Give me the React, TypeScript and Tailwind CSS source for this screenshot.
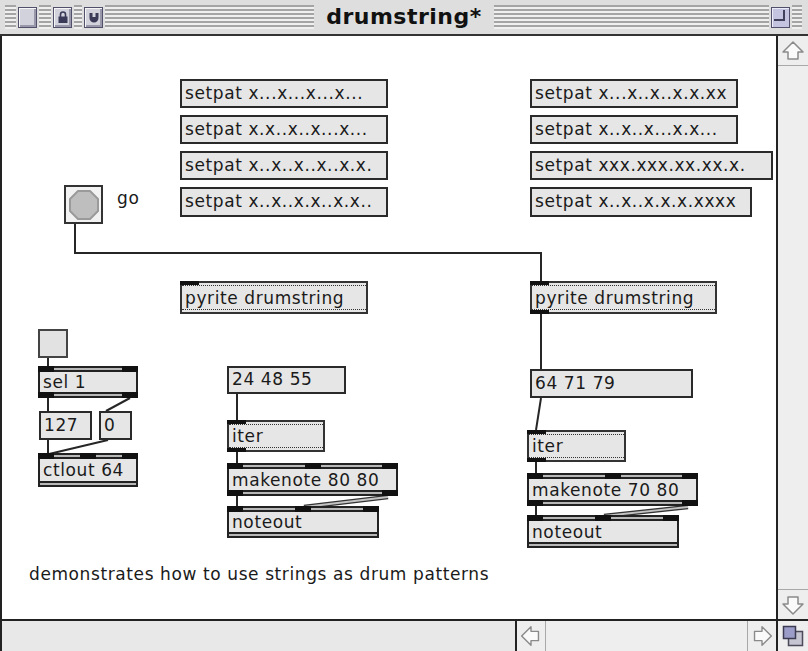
import React from 'react';

// patcher canvas origin on the page (left border 2px, title bar 36px)
const OX = 2;
const OY = 36;

type Box = {
    kind: 'msg' | 'obj' | 'dot' | 'toggle' | 'bang';
    x: number;
    y: number;
    w: number;
    h: number;
    text?: string;
    ins?: number;
    outs?: number;
};

const boxes: Box[] = [
    { kind: 'msg', x: 180, y: 79, w: 208, h: 29, text: 'setpat x...x...x...x...' },
    { kind: 'msg', x: 180, y: 115, w: 208, h: 29, text: 'setpat x.x..x..x...x...' },
    { kind: 'msg', x: 180, y: 151, w: 208, h: 29, text: 'setpat x..x..x..x..x.x.' },
    { kind: 'msg', x: 180, y: 187, w: 208, h: 30, text: 'setpat x..x..x.x..x.x..' },
    { kind: 'msg', x: 530, y: 79, w: 208, h: 29, text: 'setpat x...x..x..x.x.xx' },
    { kind: 'msg', x: 530, y: 115, w: 208, h: 29, text: 'setpat x..x..x...x.x...' },
    { kind: 'msg', x: 530, y: 151, w: 243, h: 29, text: 'setpat xxx.xxx.xx.xx.x.' },
    { kind: 'msg', x: 530, y: 187, w: 222, h: 30, text: 'setpat x..x..x.x.x.xxxx' },
    { kind: 'bang', x: 64, y: 185, w: 39, h: 39 },
    { kind: 'dot', x: 180, y: 281, w: 188, h: 33, text: 'pyrite drumstring', ins: 1, outs: 0 },
    { kind: 'dot', x: 530, y: 281, w: 187, h: 33, text: 'pyrite drumstring', ins: 1, outs: 1 },
    { kind: 'toggle', x: 38, y: 329, w: 30, h: 29 },
    { kind: 'obj', x: 38, y: 366, w: 100, h: 32, text: 'sel 1', ins: 2, outs: 2 },
    { kind: 'msg', x: 39, y: 411, w: 53, h: 29, text: '127' },
    { kind: 'msg', x: 99, y: 411, w: 33, h: 29, text: '0' },
    { kind: 'obj', x: 38, y: 453, w: 100, h: 34, text: 'ctlout 64', ins: 3, outs: 0 },
    { kind: 'msg', x: 227, y: 366, w: 119, h: 28, text: '24 48 55' },
    { kind: 'dot', x: 227, y: 420, w: 98, h: 32, text: 'iter', ins: 1, outs: 1 },
    { kind: 'obj', x: 227, y: 463, w: 171, h: 33, text: 'makenote 80 80', ins: 3, outs: 2 },
    { kind: 'obj', x: 227, y: 506, w: 152, h: 32, text: 'noteout', ins: 3, outs: 0 },
    { kind: 'msg', x: 530, y: 369, w: 163, h: 29, text: '64 71 79' },
    { kind: 'dot', x: 527, y: 430, w: 99, h: 32, text: 'iter', ins: 1, outs: 1 },
    { kind: 'obj', x: 527, y: 473, w: 171, h: 33, text: 'makenote 70 80', ins: 3, outs: 2 },
    { kind: 'obj', x: 527, y: 515, w: 152, h: 33, text: 'noteout', ins: 3, outs: 0 },
];

// patch cords, page coordinates
const cords: { pts: number[][]; fat?: boolean }[] = [
    { pts: [[75, 224], [75, 253], [541, 253], [541, 283]] },
    { pts: [[541, 314], [541, 369]] },
    { pts: [[541, 398], [536, 430]] },
    { pts: [[536, 462], [536, 473]] },
    { pts: [[536, 506], [536, 515]] },
    { pts: [[688, 507], [604, 516]], fat: true },
    { pts: [[237, 394], [237, 420]] },
    { pts: [[237, 452], [237, 463]] },
    { pts: [[237, 496], [237, 506]] },
    { pts: [[388, 497], [304, 507]], fat: true },
    { pts: [[48, 358], [48, 366]] },
    { pts: [[48, 398], [48, 411]] },
    { pts: [[130, 398], [106, 411]] },
    { pts: [[48, 440], [48, 453]] },
    { pts: [[108, 440], [49, 454]] },
];

const font = "font-['DejaVu_Sans',sans-serif] text-[17px] tracking-[0.6px] text-[#1a1a1a]";

function Ports({ n, side }: { n: number; side: 'top' | 'bottom' }) {
    if (!n) return null;
    return (
        <div
            className={
                'absolute -left-[2px] -right-[2px] flex ' +
                (n > 1 ? 'justify-between ' : 'justify-start ') +
                (side === 'top' ? '-top-[2px]' : '-bottom-[2px]')
            }
        >
            {Array.from({ length: n }).map((_, i) => (
                <div key={i} className="h-[6px] w-[16px] bg-[#111]" />
            ))}
        </div>
    );
}

function PatchBox({ b }: { b: Box }) {
    const pos = { left: b.x - OX, top: b.y - OY, width: b.w, height: b.h };

    if (b.kind === 'msg') {
        return (
            <div
                className={`absolute flex items-center border-2 border-[#2a2a2a] bg-[#e6e6e6] pl-[3px] pb-[2px] leading-[20px] whitespace-nowrap overflow-hidden ${font}`}
                style={pos}
            >
                {b.text}
            </div>
        );
    }

    if (b.kind === 'obj') {
        return (
            <div className="absolute flex flex-col border-2 border-[#222] bg-[#e6e6e6]" style={pos}>
                <div className="h-[4px] border-b-2 border-[#222] bg-[#b8b8b8]" />
                <div className={`flex flex-1 items-center pl-[3px] leading-[20px] whitespace-nowrap ${font}`}>
                    {b.text}
                </div>
                <div className="h-[4px] border-t-2 border-[#222] bg-[#b8b8b8]" />
                <Ports n={b.ins ?? 0} side="top" />
                <Ports n={b.outs ?? 0} side="bottom" />
            </div>
        );
    }

    if (b.kind === 'dot') {
        return (
            <div className="absolute flex flex-col border-2 border-[#333] bg-[#e6e6e6]" style={pos}>
                <div className="h-[3px] border-b border-dotted border-[#333]" />
                <div className={`flex flex-1 items-center pl-[3px] leading-[20px] whitespace-nowrap ${font}`}>
                    {b.text}
                </div>
                <div className="h-[3px] border-t border-dotted border-[#333]" />
                {b.ins ? <div className="absolute -left-[2px] -top-[2px] h-[4px] w-[19px] bg-[#111]" /> : null}
                {b.outs ? <div className="absolute -left-[2px] -bottom-[2px] h-[4px] w-[19px] bg-[#111]" /> : null}
            </div>
        );
    }

    if (b.kind === 'toggle') {
        return <div className="absolute border-2 border-[#444] bg-[#e2e2e2]" style={pos} />;
    }

    // bang
    return (
        <div className="absolute flex items-center justify-center border-2 border-[#333] bg-[#f2f2f2]" style={pos}>
            <svg width="32" height="32" viewBox="0 0 32 32">
                <polygon
                    points="10,2 22,2 30,10 30,22 22,30 10,30 2,22 2,10"
                    fill="#bebebe"
                    stroke="#9a9a9a"
                    strokeWidth="2"
                    strokeLinejoin="round"
                />
            </svg>
        </div>
    );
}

function Stripes({ className }: { className: string }) {
    return (
        <div
            className={`h-[24px] bg-[repeating-linear-gradient(to_bottom,#a4a4a4_0px,#a4a4a4_2px,#efefef_2px,#efefef_4px)] ${className}`}
        />
    );
}

function TitleButton({ children }: { children?: React.ReactNode }) {
    return (
        <div className="flex h-[21px] w-[19px] items-center justify-center border border-[#50506a] bg-[#d2d2dc] shadow-[inset_1px_1px_0_#f6f6f6,inset_-2px_-2px_0_#9898aa]">
            {children}
        </div>
    );
}

function ScrollArrow({ dir }: { dir: 'up' | 'down' | 'left' | 'right' }) {
    const pts = {
        up: '15,6 25,16 20,16 20,23 10,23 10,16 5,16',
        down: '15,24 25,14 20,14 20,7 10,7 10,14 5,14',
        left: '5,15 15,5 15,10 23,10 23,20 15,20 15,25',
        right: '25,15 15,5 15,10 7,10 7,20 15,20 15,25',
    }[dir];
    return (
        <svg width="30" height="30" viewBox="0 0 30 30">
            <polygon points={pts} fill="#fafafa" stroke="#8a8a8a" strokeWidth="1.5" strokeLinejoin="round" />
        </svg>
    );
}

export default function App() {
    return (
        <div className="flex h-[651px] w-[808px] flex-col overflow-hidden bg-[#dedede]">
            {/* Title bar */}
            <div className="grid h-[36px] shrink-0 grid-cols-[1fr_auto_1fr] items-center border-b-2 border-[#333] bg-[#dedede]">
                <div className="flex items-center gap-[2px] pl-[5px]">
                    <Stripes className="w-[11px]" />
                    <TitleButton />
                    <Stripes className="w-[12px]" />
                    <TitleButton>
                        <svg width="12" height="14" viewBox="0 0 12 14">
                            <path d="M3.5 7 V4.5 a2.5 2.5 0 0 1 5 0 V7" fill="none" stroke="#3a3a58" strokeWidth="1.6" />
                            <rect x="1.5" y="6.5" width="9" height="6.5" fill="#3a3a58" />
                        </svg>
                    </TitleButton>
                    <Stripes className="w-[8px]" />
                    <TitleButton>
                        <svg width="12" height="13" viewBox="0 0 12 13">
                            <path d="M1.5 2 h3 v4 h3 v-4 h3 v5 a4.5 4.5 0 0 1 -9 0 z" fill="#3a3a58" />
                        </svg>
                    </TitleButton>
                    <Stripes className="flex-1" />
                </div>
                <div className="px-[12px] font-['DejaVu_Sans',sans-serif] text-[22px] font-bold leading-none tracking-[0.5px] text-[#111]">
                    drumstring*
                </div>
                <div className="flex items-center gap-[2px] pr-[6px]">
                    <Stripes className="flex-1" />
                    <div className="flex h-[21px] w-[19px] items-start justify-start border border-[#50506a] bg-[#c4c4e0] p-[2px] shadow-[inset_1px_1px_0_#ececf8]">
                        <div className="h-[11px] w-[11px] border-r-2 border-b-2 border-[#40405a]" />
                    </div>
                    <Stripes className="w-[10px]" />
                </div>
            </div>

            {/* Canvas + vertical scrollbar */}
            <div className="flex min-h-0 flex-1 border-l-2 border-[#222]">
                <div className="relative flex-1 overflow-hidden bg-white">
                    <svg className="absolute inset-0 h-full w-full" viewBox={`${OX} ${OY} 774 583`} preserveAspectRatio="none">
                        {cords.map((c, i) => {
                            const p = c.pts.map(q => q.join(',')).join(' ');
                            return c.fat ? (
                                <g key={i}>
                                    <polyline points={p} fill="none" stroke="#333" strokeWidth="4.5" />
                                    <polyline points={p} fill="none" stroke="#c4c4c4" strokeWidth="1.8" />
                                </g>
                            ) : (
                                <polyline key={i} points={p} fill="none" stroke="#262626" strokeWidth="2" />
                            );
                        })}
                    </svg>

                    {boxes.map((b, i) => (
                        <PatchBox key={i} b={b} />
                    ))}

                    <div className={`absolute left-[115px] top-[152px] leading-[20px] ${font}`}>go</div>
                    <div className={`absolute left-[27px] top-[528px] whitespace-nowrap leading-[20px] ${font}`}>
                        demonstrates how to use strings as drum patterns
                    </div>
                </div>

                <div className="flex w-[32px] shrink-0 flex-col border-l-2 border-[#222] bg-[#eeeeee]">
                    <div className="flex h-[30px] items-center justify-center border-b border-[#a8a8a8]">
                        <ScrollArrow dir="up" />
                    </div>
                    <div className="flex-1" />
                    <div className="flex h-[30px] items-center justify-center border-t border-[#a8a8a8]">
                        <ScrollArrow dir="down" />
                    </div>
                </div>
            </div>

            {/* Bottom bar */}
            <div className="flex h-[32px] shrink-0 border-t-2 border-l-2 border-[#222] bg-[#eeeeee]">
                <div className="w-[515px] border-r-2 border-[#222] bg-[#e8e8e8]" />
                <div className="flex w-[29px] items-center justify-center border-r border-[#a8a8a8]">
                    <ScrollArrow dir="left" />
                </div>
                <div className="flex-1" />
                <div className="flex w-[29px] items-center justify-center border-l border-[#a8a8a8]">
                    <ScrollArrow dir="right" />
                </div>
                <div className="flex w-[32px] items-center justify-center border-l-2 border-[#222]">
                    <svg width="26" height="26" viewBox="0 0 26 26">
                        <rect x="8.5" y="8.5" width="14" height="14" fill="#c6c6d2" stroke="#4a4a5a" strokeWidth="1.5" />
                        <rect x="3.5" y="3.5" width="12" height="12" fill="#9c9cc8" stroke="#3a3a50" strokeWidth="1.5" />
                    </svg>
                </div>
            </div>
        </div>
    );
}
